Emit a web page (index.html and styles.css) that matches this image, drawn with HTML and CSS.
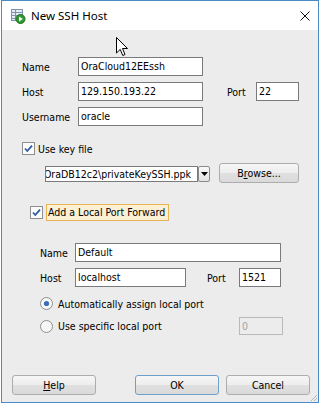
FILE: index.html
```html
<!DOCTYPE html>
<html>
<head>
<meta charset="utf-8">
<link rel="stylesheet" href="styles.css">
</head>
<body>
<div class="window">
  <div class="titlebar">
    <svg class="app-icon" width="16" height="16" viewBox="0 0 16 16">
      <rect x="1.5" y="1.5" width="11" height="11" fill="#e4ebf3" stroke="#7d93ad"/>
      <line x1="1.5" y1="4.5" x2="12.5" y2="4.5" stroke="#7d93ad"/>
      <line x1="1.5" y1="7.5" x2="12.5" y2="7.5" stroke="#7d93ad"/>
      <line x1="1.5" y1="10.5" x2="12.5" y2="10.5" stroke="#7d93ad"/>
      <line x1="5.5" y1="1.5" x2="5.5" y2="12.5" stroke="#7d93ad"/>
      <circle cx="10.5" cy="11" r="4.5" fill="#2f9a2f" stroke="#1f6e1f"/>
      <path d="M9 8.5 L12.8 11 L9 13.5 Z" fill="#fff"/>
    </svg>
    <span class="title">New SSH Host</span>
    <svg class="close" width="10" height="10" viewBox="0 0 10 10">
      <path d="M0.5 0.5 L9.5 9.5 M9.5 0.5 L0.5 9.5" stroke="#111" stroke-width="1"/>
    </svg>
  </div>
  <div class="content">
    <div class="grid1">
      <span class="lbl r1">Name</span>
      <div class="field r1 wide">OraCloud12EEssh</div>
      <span class="lbl r2">Host</span>
      <div class="field r2 wide">129.150.193.22</div>
      <span class="lbl r2 c4">Port</span>
      <div class="field r2 c5">22</div>
      <span class="lbl r3">Username</span>
      <div class="field r3 wide">oracle</div>
    </div>

    <div class="check-row">
      <svg class="cb" width="13" height="13" viewBox="0 0 13 13">
        <rect x="0.5" y="0.5" width="12" height="12" fill="#fbfbfb" stroke="#8e8f8f"/>
        <path d="M3 6.5 L5.3 9 L10 3.6" fill="none" stroke="#2d5aa6" stroke-width="1.8"/>
      </svg>
      <span>Use key file</span>
    </div>

    <div class="key-row">
      <div class="combo">
        <div class="combo-text"><span>OraDB12c2\privateKeySSH.ppk</span></div>
        <div class="combo-btn"><svg width="7" height="4" viewBox="0 0 7 4"><path d="M0 0 H7 L3.5 4 Z" fill="#000"/></svg></div>
      </div>
      <div class="btn browse">B<u>r</u>owse...</div>
    </div>

    <div class="pf-row">
      <svg class="cb" width="13" height="13" viewBox="0 0 13 13">
        <rect x="0.5" y="0.5" width="12" height="12" fill="#fbfbfb" stroke="#8e8f8f"/>
        <path d="M3 6.5 L5.3 9 L10 3.6" fill="none" stroke="#2d5aa6" stroke-width="1.8"/>
      </svg>
      <span class="focus-lbl">Add a Local Port Forward</span>
    </div>

    <div class="grid2">
      <span class="lbl r1">Name</span>
      <div class="field r1 wide2">Default</div>
      <span class="lbl r2">Host</span>
      <div class="field r2">localhost</div>
      <span class="lbl r2 c4">Port</span>
      <div class="field r2 c5">1521</div>
    </div>

    <div class="radio-row first">
      <svg class="rb" width="13" height="13" viewBox="0 0 13 13">
        <circle cx="6.5" cy="6.5" r="6" fill="#f6f6f6" stroke="#8e8f8f"/>
        <circle cx="6.5" cy="6.5" r="2.6" fill="#3a6fb5"/>
      </svg>
      <span>Automatically assign local port</span>
    </div>
    <div class="radio-row second">
      <svg class="rb" width="13" height="13" viewBox="0 0 13 13">
        <circle cx="6.5" cy="6.5" r="6" fill="#f6f6f6" stroke="#8e8f8f"/>
      </svg>
      <span>Use specific local port</span>
      <div class="field disabled">0</div>
    </div>

    <div class="buttons">
      <div class="btn"><u>H</u>elp</div>
      <div class="btn ok">OK</div>
      <div class="btn cancel">Cancel</div>
    </div>
  </div>
  <svg class="grip" width="8" height="8" viewBox="0 0 8 8">
    <path d="M7 1 L1 7 M7 4 L4 7 M7 7 L7 7" stroke="#b8b8b8" stroke-width="1"/>
  </svg>
  <svg class="cursor" width="13" height="20" viewBox="0 0 13 20">
    <path d="M0.5 0.5 L0.5 16 L4.2 12.4 L6.8 18.5 L9 17.5 L6.5 11.5 L11.5 11.5 Z" fill="#fff" stroke="#000" stroke-width="1"/>
  </svg>
</div>
</body>
</html>
```

FILE: styles.css
```css
body {
  margin: 0;
  background: #ffffff;
  font-family: "DejaVu Sans Condensed", "DejaVu Sans", sans-serif;
  font-stretch: condensed;
  font-size: 10.5px;
  color: #000;
}

.window {
  position: relative;
  margin-left: 1px;
  width: 318px;
  height: 403px;
  box-sizing: border-box;
  border: 1px solid #4a8bc9;
  background: #ececec;
  display: flex;
  flex-direction: column;
}

.titlebar {
  height: 29px;
  flex: none;
  background: #fff;
  display: flex;
  align-items: center;
  padding-left: 8px;
  padding-right: 8px;
}

.app-icon { flex: none; }

.title {
  margin-left: 5px;
  font-family: "Noto Sans", sans-serif;
  font-stretch: normal;
  font-size: 11.5px;
}

.close { margin-left: auto; }

.content {
  display: flex;
  flex-direction: column;
}

.lbl { white-space: nowrap; }

.field {
  height: 19px;
  box-sizing: border-box;
  border: 1px solid #7a7a7a;
  background: #fff;
  padding-left: 2px;
  line-height: 17px;
  white-space: nowrap;
  overflow: hidden;
}

.grid1 {
  margin: 27px 0 0 20px;
  display: grid;
  grid-template-columns: 56px 125px 24px 29px 43px;
  grid-auto-rows: 19px;
  row-gap: 6px;
  align-items: center;
}

.grid2 {
  margin: 22px 0 0 38px;
  display: grid;
  grid-template-columns: 35px 111px 21px 32px 42px;
  grid-auto-rows: 19px;
  row-gap: 6px;
  align-items: center;
}

.r1 { grid-row: 1; }
.r2 { grid-row: 2; }
.r3 { grid-row: 3; }
.c4 { grid-column: 4; }
.c5 { grid-column: 5; }
.wide { grid-column: 2; }
.wide2 { grid-column: 2 / 6; }

.check-row {
  margin: 16px 0 0 20px;
  height: 13px;
  display: flex;
  align-items: center;
  gap: 3px;
}

.cb, .rb { flex: none; display: block; }

.key-row {
  margin: 8px 0 0 43px;
  height: 20px;
  display: flex;
  align-items: flex-start;
}

.combo {
  margin-top: 3px;
  width: 165px;
  height: 16px;
  display: flex;
}

.combo-text {
  flex: 1;
  min-width: 0;
  box-sizing: border-box;
  border: 1px solid #7a7a7a;
  background: #fff;
  display: flex;
  justify-content: flex-end;
  overflow: hidden;
  line-height: 14px;
  padding-right: 6px;
}

.combo-text span {
  flex: none;
  white-space: nowrap;
}

.combo-btn {
  width: 12px;
  box-sizing: border-box;
  border: 1px solid #8a8a8a;
  border-radius: 2px;
  background: linear-gradient(#f8f8f8, #e2e2e2);
  display: flex;
  align-items: center;
  justify-content: center;
}

.btn {
  width: 84px;
  height: 20px;
  box-sizing: border-box;
  border: 1px solid #adadad;
  border-radius: 3px;
  background: linear-gradient(#f6f6f6, #ededed 50%, #e0e0e0 51%, #dadada);
  display: flex;
  align-items: center;
  justify-content: center;
  white-space: nowrap;
}

.browse {
  width: 80px;
  margin-left: 9px;
}

.pf-row {
  margin: 21px 0 0 28px;
  display: flex;
  align-items: center;
  gap: 3px;
}

.focus-lbl {
  height: 17px;
  box-sizing: border-box;
  width: 123px;
  border: 1px solid #e8b357;
  background: #fbf0d4;
  padding-left: 1px;
  line-height: 15px;
  white-space: nowrap;
}

.radio-row {
  margin-left: 38px;
  width: 243px;
  display: flex;
  align-items: center;
  gap: 5px;
}

.radio-row.first {
  margin-top: 10px;
  height: 13px;
}

.radio-row.second {
  margin-top: 7px;
  height: 18px;
}

.field.disabled {
  margin-left: auto;
  width: 44px;
  height: 18px;
  line-height: 16px;
  border-color: #b9b9b9;
  background: #ececec;
  color: #a3a3a3;
}

.buttons {
  margin-top: 40px;
  padding-left: 10px;
  display: flex;
}

.btn.ok {
  margin-left: 39px;
  border-color: #6f9fcc;
}

.btn.cancel {
  margin-left: 7px;
}

.grip {
  position: absolute;
  right: 0;
  bottom: 0;
}

.cursor {
  position: absolute;
  left: 114px;
  top: 36px;
}
```
